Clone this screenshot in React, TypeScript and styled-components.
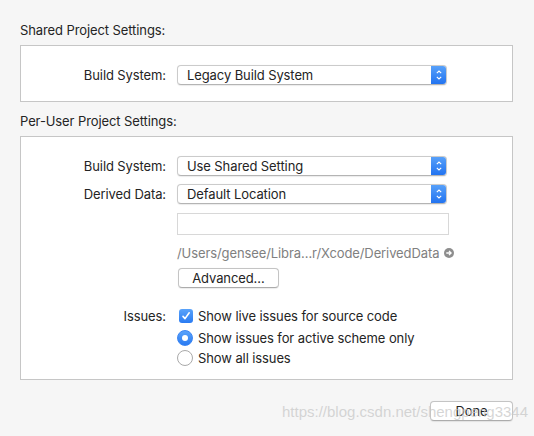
import React from 'react';
import styled, { createGlobalStyle } from 'styled-components';

const GlobalStyle = createGlobalStyle`
  html, body {
    margin: 0;
    padding: 0;
    background: #f6f6f6;
  }
  body {
    font-family: Inter, "Liberation Sans", Arial, sans-serif;
    font-size: 13px;
    letter-spacing: -0.1px;
    color: #242424;
  }
`;

const Page = styled.div`
  position: relative;
  width: 534px;
  height: 436px;
  box-sizing: border-box;
  padding: 22px 21px 0 20px;
  background: #f6f6f6;
  overflow: hidden;
`;

const SectionTitle = styled.div<{ $top?: number }>`
  height: 16px;
  line-height: 16px;
  margin-top: ${(p) => p.$top ?? 0}px;
  margin-bottom: 7px;
`;

const Box = styled.div<{ $pt: number; $pb: number }>`
  width: 493px;
  box-sizing: border-box;
  background: #ffffff;
  border: 1px solid #c6c6c6;
  padding: ${(p) => p.$pt}px 0 ${(p) => p.$pb}px 0;
`;

const Row = styled.div<{ $gap?: number; $h?: number }>`
  display: grid;
  grid-template-columns: 145px 274px;
  column-gap: 11px;
  align-items: center;
  margin-top: ${(p) => p.$gap ?? 0}px;
  min-height: ${(p) => p.$h ?? 16}px;
`;

const Label = styled.div`
  text-align: right;
  line-height: 16px;
`;

const Popup = styled.div`
  width: 270px;
  height: 20px;
  box-sizing: border-box;
  display: flex;
  align-items: center;
  background: #ffffff;
  border: 1px solid #cbcbcb;
  border-bottom-color: #b4b4b4;
  border-radius: 4px;
  box-shadow: 0 0.5px 1px rgba(0, 0, 0, 0.08);
  padding-left: 9px;
  overflow: hidden;
`;

const PopupText = styled.span`
  flex: 1;
  line-height: 16px;
`;

const Stepper = styled.div`
  width: 16px;
  height: 20px;
  margin: -1px -1px -1px 0;
  border-radius: 0 4px 4px 0;
  background: linear-gradient(#5aa3fa, #1f71f0);
  display: flex;
  align-items: center;
  justify-content: center;
`;

const TextField = styled.div`
  width: 272px;
  height: 22px;
  box-sizing: border-box;
  background: #ffffff;
  border: 1px solid #d8d8d8;
`;

const PathLine = styled.div`
  display: flex;
  align-items: center;
  gap: 5px;
  color: #808080;
  line-height: 16px;
  white-space: nowrap;

  svg {
    flex-shrink: 0;
  }
`;

const PushButton = styled.div<{ $w: number; $ml?: number }>`
  width: ${(p) => p.$w}px;
  height: 20px;
  margin-left: ${(p) => p.$ml ?? 0}px;
  box-sizing: border-box;
  background: #ffffff;
  border: 1px solid #c4c4c4;
  border-bottom-color: #acacac;
  border-radius: 4px;
  box-shadow: 0 0.5px 1px rgba(0, 0, 0, 0.08);
  display: flex;
  align-items: center;
  justify-content: center;
  line-height: 16px;
`;

const Option = styled.div`
  display: flex;
  align-items: center;
  gap: 5px;
  line-height: 16px;
  white-space: nowrap;
`;

const CheckBox = styled.div`
  width: 14px;
  height: 14px;
  margin-left: 2px;
  border-radius: 3px;
  background: linear-gradient(#5aa3fa, #2a7bf2);
  display: flex;
  align-items: center;
  justify-content: center;
`;

const Radio = styled.div<{ $on?: boolean }>`
  width: 16px;
  height: 16px;
  box-sizing: border-box;
  border-radius: 50%;
  background: ${(p) => (p.$on ? 'linear-gradient(#5aa3fa, #2a7bf2)' : '#ffffff')};
  border: 1px solid ${(p) => (p.$on ? '#3a85f3' : '#a9a9a9')};
  display: flex;
  align-items: center;
  justify-content: center;
  &::after {
    content: '';
    display: ${(p) => (p.$on ? 'block' : 'none')};
    width: 6px;
    height: 6px;
    border-radius: 50%;
    background: #ffffff;
  }
`;

const Footer = styled.div`
  display: flex;
  justify-content: flex-end;
  margin-top: 21px;
`;

const Watermark = styled.div`
  position: absolute;
  left: 282px;
  top: 403px;
  font-family: "Liberation Sans", Arial, sans-serif;
  font-size: 15px;
  letter-spacing: 0;
  color: rgba(200, 200, 200, 0.75);
  white-space: nowrap;
  pointer-events: none;
`;

const Chevrons = () => (
  <svg width="8" height="14" viewBox="0 0 8 14">
    <path d="M1.8 5.2 L4 3 L6.2 5.2" stroke="#fff" strokeWidth="1.1" fill="none" />
    <path d="M1.8 8.8 L4 11 L6.2 8.8" stroke="#fff" strokeWidth="1.1" fill="none" />
  </svg>
);

const ArrowCircle = () => (
  <svg width="10" height="10" viewBox="0 0 10 10">
    <circle cx="5" cy="5" r="5" fill="#8e8e8e" />
    <path d="M2.3 5 H7 M5 2.9 L7.1 5 L5 7.1" stroke="#fff" strokeWidth="1.3" fill="none" />
  </svg>
);

const Check = () => (
  <svg width="12" height="12" viewBox="0 0 12 12">
    <path d="M3 6.4 L5 8.6 L9.2 2.8" stroke="#fff" strokeWidth="1.6" fill="none" strokeLinecap="round" strokeLinejoin="round" />
  </svg>
);

const PopupButton: React.FC<{ value: string }> = ({ value }) => (
  <Popup>
    <PopupText>{value}</PopupText>
    <Stepper>
      <Chevrons />
    </Stepper>
  </Popup>
);

export default function App() {
  return (
    <Page>
      <GlobalStyle />
      <SectionTitle>Shared Project Settings:</SectionTitle>
      <Box $pt={19} $pb={16}>
        <Row $h={20}>
          <Label>Build System:</Label>
          <PopupButton value="Legacy Build System" />
        </Row>
      </Box>

      <SectionTitle $top={11}>Per-User Project Settings:</SectionTitle>
      <Box $pt={19} $pb={13}>
        <Row $h={20}>
          <Label>Build System:</Label>
          <PopupButton value="Use Shared Setting" />
        </Row>
        <Row $h={20} $gap={8}>
          <Label>Derived Data:</Label>
          <PopupButton value="Default Location" />
        </Row>
        <Row $h={22} $gap={9}>
          <span />
          <TextField />
        </Row>
        <Row $gap={10}>
          <span />
          <PathLine>
            /Users/gensee/Libra…r/Xcode/DerivedData
            <ArrowCircle />
          </PathLine>
        </Row>
        <Row $h={20} $gap={7}>
          <span />
          <PushButton $w={101} $ml={1}>Advanced…</PushButton>
        </Row>
        <Row $gap={20}>
          <Label>Issues:</Label>
          <Option>
            <CheckBox>
              <Check />
            </CheckBox>
            Show live issues for source code
          </Option>
        </Row>
        <Row $gap={6}>
          <span />
          <Option>
            <Radio $on />
            Show issues for active scheme only
          </Option>
        </Row>
        <Row $gap={4}>
          <span />
          <Option>
            <Radio />
            Show all issues
          </Option>
        </Row>
      </Box>

      <Footer>
        <PushButton $w={83}>Done</PushButton>
      </Footer>
      <Watermark>https://blog.csdn.net/shengpeng3344</Watermark>
    </Page>
  );
}
